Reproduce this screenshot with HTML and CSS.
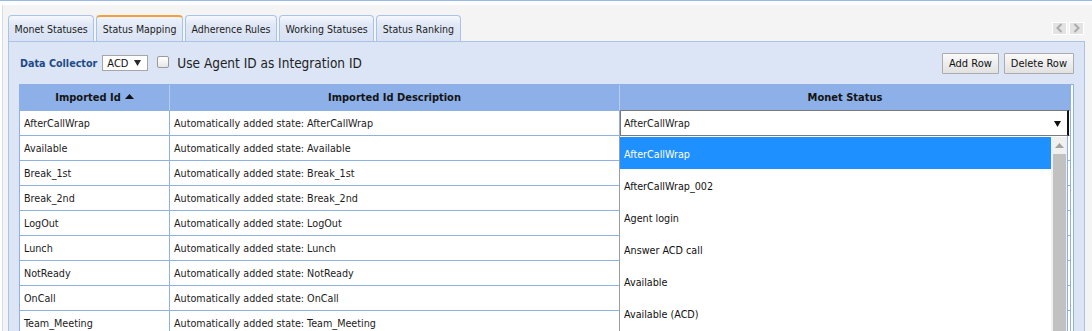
FILE: index.html
```html
<!DOCTYPE html>
<html>
<head>
<meta charset="utf-8">
<title>Status Mapping</title>
<link rel="stylesheet" href="styles.css">
</head>
<body>
<div class="frame">
  <div class="shell">
    <div class="tabbar">
      <ul class="tabs">
        <li class="tab">Monet Statuses</li>
        <li class="tab active">Status Mapping</li>
        <li class="tab">Adherence Rules</li>
        <li class="tab">Working Statuses</li>
        <li class="tab">Status Ranking</li>
      </ul>
      <div class="tabnav">
        <span class="navbtn"><svg width="7" height="10" viewBox="0 0 7 10"><polyline points="5.5,1 1.5,5 5.5,9" fill="none" stroke="#ababab" stroke-width="2"/></svg></span>
        <span class="navbtn"><svg width="7" height="10" viewBox="0 0 7 10"><polyline points="1.5,1 5.5,5 1.5,9" fill="none" stroke="#ababab" stroke-width="2"/></svg></span>
      </div>
    </div>
    <div class="panel">
      <div class="toolbar">
        <span class="dc-label">Data Collector</span>
        <span class="mini-select"><span>ACD</span><svg class="caret" width="7" height="6" viewBox="0 0 7 6"><polygon points="0,0 7,0 3.5,6" fill="#2a2a2a"/></svg></span>
        <span class="checkbox"></span>
        <span class="chk-label">Use Agent ID as Integration ID</span>
        <div class="actions">
          <button class="btn">Add Row</button>
          <button class="btn">Delete Row</button>
        </div>
      </div>
      <div class="grid-wrap">
        <table class="grid">
          <colgroup><col class="c1"><col class="c2"><col class="c3"></colgroup>
          <thead>
            <tr>
              <th>Imported Id<svg class="sort" width="9" height="5" viewBox="0 0 9 5"><polygon points="0,5 9,5 4.5,0" fill="#111"/></svg></th>
              <th>Imported Id Description</th>
              <th>Monet Status</th>
            </tr>
          </thead>
          <tbody>
            <tr>
              <td>AfterCallWrap</td>
              <td>Automatically added state: AfterCallWrap</td>
              <td class="editing">
                <div class="editor"><span>AfterCallWrap</span><svg class="caret" width="7" height="6" viewBox="0 0 7 6"><polygon points="0,0 7,0 3.5,6" fill="#111"/></svg></div>
                <div class="dropdown">
                  <ul class="options">
                    <li class="sel">AfterCallWrap</li>
                    <li>AfterCallWrap_002</li>
                    <li>Agent login</li>
                    <li>Answer ACD call</li>
                    <li>Available</li>
                    <li>Available (ACD)</li>
                    <li>Break</li>
                  </ul>
                  <div class="vscroll">
                    <div class="up"><svg width="9" height="5" viewBox="0 0 9 5"><polygon points="0,5 9,5 4.5,0" fill="#a3a3a3"/></svg></div>
                    <div class="thumb"></div>
                  </div>
                </div>
              </td>
            </tr>
            <tr><td>Available</td><td>Automatically added state: Available</td><td></td></tr>
            <tr><td>Break_1st</td><td>Automatically added state: Break_1st</td><td></td></tr>
            <tr><td>Break_2nd</td><td>Automatically added state: Break_2nd</td><td></td></tr>
            <tr><td>LogOut</td><td>Automatically added state: LogOut</td><td></td></tr>
            <tr><td>Lunch</td><td>Automatically added state: Lunch</td><td></td></tr>
            <tr><td>NotReady</td><td>Automatically added state: NotReady</td><td></td></tr>
            <tr><td>OnCall</td><td>Automatically added state: OnCall</td><td></td></tr>
            <tr><td>Team_Meeting</td><td>Automatically added state: Team_Meeting</td><td></td></tr>
          </tbody>
        </table>
      </div>
    </div>
  </div>
</div>
</body>
</html>
```

FILE: styles.css
```css
* { box-sizing: border-box; }

html, body {
  margin: 0;
  padding: 0;
  overflow: hidden;
}

body {
  width: 1092px;
  height: 331px;
  font-family: "DejaVu Sans Condensed", "DejaVu Sans", sans-serif;
  font-size: 10.7px;
  color: #1b1b1b;
  background: #ffffff;
}

.frame {
  border-top: 1px solid #9ab8e5;
  padding: 4px 0 0 2px;
  background: #ffffff;
}

.shell {
  background: #f4f4f4;
  border-left: 1px solid #d3dceb;
  padding: 10px 7px 0 5px;
}

/* tabs */
.tabbar {
  display: flex;
  align-items: center;
  height: 26px;
}

.tabs {
  display: flex;
  gap: 2px;
  list-style: none;
  margin: 0;
  padding: 0;
  align-self: stretch;
}

.tab {
  height: 26px;
  padding: 0 5.5px;
  border: 1px solid #a9c3e8;
  border-bottom: none;
  border-radius: 4px 4px 0 0;
  background: linear-gradient(#f5f8fd, #e0e8f6 35%, #d8e2f3);
  display: flex;
  align-items: center;
  font-size: 10.5px;
  color: #1c1c1c;
}

.tab.active {
  border-top: 2px solid #f2a23c;
  background: linear-gradient(#eef3fb, #e2e9f6 40%, #dbe4f4);
}

.tabnav {
  margin-left: auto;
  margin-right: 1px;
  display: flex;
  gap: 2px;
}

.navbtn {
  width: 15px;
  height: 13px;
  border: 1px solid #ffffff;
  background: #e3e3e3;
  display: flex;
  align-items: center;
  justify-content: center;
}

/* panel */
.panel {
  background: #dbe5f6;
  border: 1px solid #a9c3e8;
  padding: 0 10px;
  height: 320px;
}

.toolbar {
  height: 42px;
  display: flex;
  align-items: center;
}

.dc-label {
  font-weight: bold;
  font-size: 10.7px;
  color: #1f4a85;
  margin-left: 1px;
}

.mini-select {
  margin-left: 5px;
  width: 46px;
  height: 16px;
  border: 1px solid #a6a6a6;
  background: #ffffff;
  display: flex;
  align-items: center;
  justify-content: space-between;
  padding: 0 6px 0 4px;
  font-size: 11px;
  color: #111;
}

.checkbox {
  margin-left: 9px;
  width: 12px;
  height: 12px;
  border: 1px solid #9a9a9a;
  border-radius: 2px;
  background: linear-gradient(#ffffff, #e6e6e6);
  margin-top: -3px;
}

.chk-label {
  margin-left: 8px;
  font-size: 13.5px;
  color: #222;
}

.actions {
  margin-left: auto;
  display: flex;
  gap: 5px;
}

.btn {
  height: 21px;
  padding: 0 6px;
  border: 1px solid #acacac;
  border-radius: 1px;
  background: linear-gradient(#fafafa, #e1e1e1);
  font-family: "DejaVu Sans Condensed", "DejaVu Sans", sans-serif;
  font-size: 11px;
  color: #111;
}

/* grid */
.grid-wrap {
  border: 1px solid #8fb0e2;
  background: #ffffff;
  height: 260px;
}

.grid {
  border-collapse: separate;
  border-spacing: 0;
  table-layout: fixed;
  width: 1051px;
}

.c1 { width: 150px; }
.c2 { width: 450px; }
.c3 { width: 451px; }

.grid th {
  height: 26px;
  padding: 0;
  background: #8cb0e7;
  border-right: 1px solid #b6ccef;
  border-bottom: 1px solid #8fb0e2;
  font-weight: bold;
  font-size: 11px;
  text-align: center;
  color: #141414;
}

.grid th:last-child { border-right: 1px solid #8fb0e2; }

.sort {
  margin-left: 4px;
  vertical-align: 2px;
}

.grid td {
  height: 25px;
  padding: 0 4px;
  border-right: 1px solid #8fb0e2;
  border-bottom: 1px solid #8fb0e2;
  white-space: nowrap;
  overflow: visible;
}

.grid td.editing {
  position: relative;
  padding: 0;
}

.editor {
  position: absolute;
  left: 0;
  top: -1px;
  width: 449px;
  height: 26px;
  border: 1px solid #7a7a7a;
  border-right: 2px solid #111;
  background: #ffffff;
  display: flex;
  align-items: center;
  justify-content: space-between;
  padding: 1px 6px 0 3px;
  z-index: 2;
}

.dropdown {
  position: absolute;
  left: -1px;
  top: 25px;
  width: 449px;
  height: 230px;
  background: #ffffff;
  border-left: 1px solid #9d9d9d;
  border-right: 1px solid #8fb0e2;
  padding-top: 1px;
  display: flex;
  z-index: 3;
}

.options {
  flex: 1;
  list-style: none;
  margin: 0;
  padding: 0;
}

.options li {
  height: 32px;
  display: flex;
  align-items: center;
  padding: 2px 0 0 4px;
  color: #111;
}

.options li.sel {
  background: #1e90ff;
  color: #ffffff;
}

.vscroll {
  width: 16px;
  background: #f0f0f0;
  display: flex;
  flex-direction: column;
}

.vscroll .up {
  height: 17px;
  display: flex;
  align-items: center;
  justify-content: center;
}

.vscroll .thumb {
  margin: 0 1px 0 2px;
  height: 200px;
  background: #c1c1c1;
}
```
